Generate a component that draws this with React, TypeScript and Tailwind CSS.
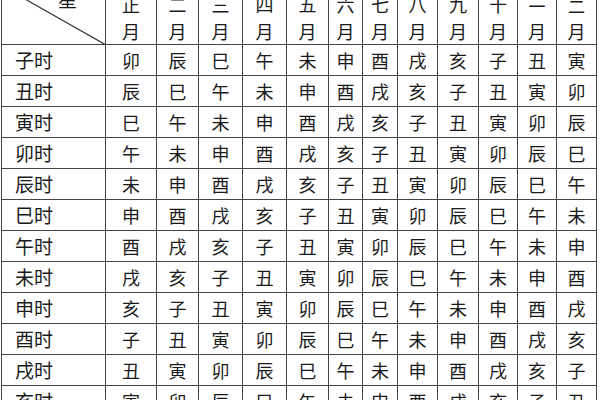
import React from 'react';

const BRANCHES = ['子', '丑', '寅', '卯', '辰', '巳', '午', '未', '申', '酉', '戌', '亥'];

// header month names; two-char names are stacked in one slot
const MONTHS: string[][] = [
  ['正'], ['二'], ['三'], ['四'], ['五'], ['六'],
  ['七'], ['八'], ['九'], ['十'], ['十', '一'], ['十', '二'],
];

const cell = 'border-r-[1.5px] border-b-[1.5px] border-[#444]';

export default function App() {
  return (
    <div
      className="w-[600px] h-[400px] overflow-hidden bg-white text-[#1a1a1a] pl-[1px]"
      style={{ fontFamily: '"Noto Sans CJK SC", "Noto Sans", sans-serif' }}
    >
      <div className="-mt-[15px] grid grid-cols-[104px_51px_42px_44px_44px_42px_34px_35px_40px_41px_39px_39px_40px] grid-rows-[59px_repeat(12,31px)] w-max border-l-[1.5px] border-t-[1.5px] border-[#444]">
        {/* corner cell with diagonal */}
        <div className={`${cell} relative`}>
          <svg className="absolute inset-0" width="104" height="59" viewBox="0 0 104 59">
            <line x1="0" y1="0" x2="104" y2="59" stroke="#333" strokeWidth="1.2" />
          </svg>
          <span className="absolute left-[56px] top-[3px] text-[19px] leading-none">星</span>
        </div>

        {MONTHS.map((m, i) => (
          <div key={i} className={`${cell} flex flex-col items-center pt-[5px] text-[18px]`}>
            {m.length === 1 ? (
              <span className="leading-[27px]">{m[0]}</span>
            ) : (
              <span className="h-[27px] flex flex-col items-center justify-end text-[17px] leading-[15px] pb-[5px]">
                <span>{m[0]}</span>
                <span>{m[1]}</span>
              </span>
            )}
            <span className="leading-[27px]">月</span>
          </div>
        ))}

        {BRANCHES.map((hour, r) => (
          <React.Fragment key={hour}>
            <div className={`${cell} flex items-center pl-[13px] text-[19px]`}>{hour}时</div>
            {BRANCHES.map((_, c) => (
              <div key={c} className={`${cell} flex items-center justify-center text-[18px]`}>
                {BRANCHES[(r + c + 3) % 12]}
              </div>
            ))}
          </React.Fragment>
        ))}
      </div>
    </div>
  );
}
